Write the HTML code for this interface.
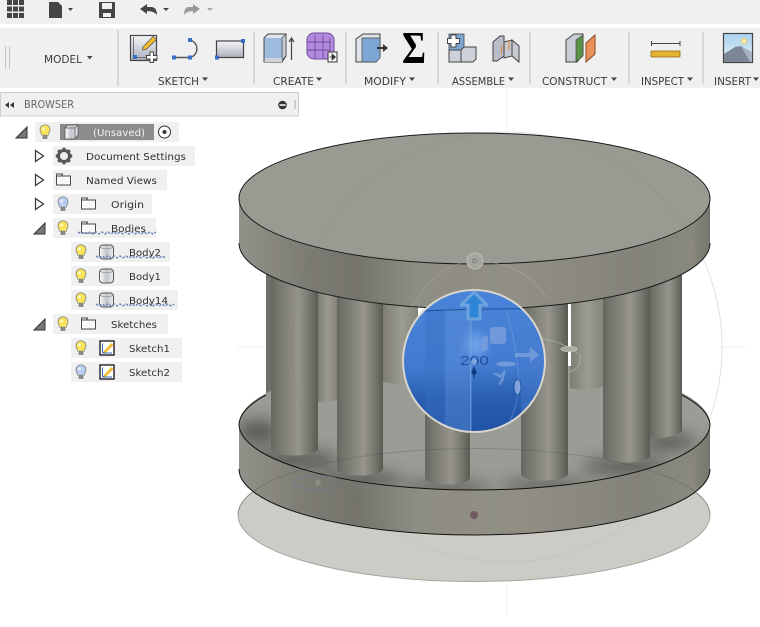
<!DOCTYPE html>
<html><head><meta charset="utf-8"><style>
html,body{margin:0;padding:0;background:#fff;width:760px;height:627px;overflow:hidden}
svg{display:block}
text{font-family:"DejaVu Sans","Liberation Sans",sans-serif}
.lb{font-size:10.5px;fill:#3a3a3a}
.tr{font-size:10px;fill:#303030}
</style></head><body>
<svg width="760" height="627" viewBox="0 0 760 627" xmlns="http://www.w3.org/2000/svg">
<defs>
<linearGradient id="side" x1="0" x2="1" y1="0" y2="0">
<stop offset="0" stop-color="#92918a"/><stop offset=".05" stop-color="#8b8a81"/><stop offset=".14" stop-color="#7d7c74"/><stop offset=".25" stop-color="#75746c"/><stop offset=".38" stop-color="#8f8e84"/><stop offset=".6" stop-color="#918f84"/><stop offset=".85" stop-color="#83827a"/><stop offset=".96" stop-color="#8a897f"/><stop offset="1" stop-color="#76756d"/>
</linearGradient>
<linearGradient id="col" x1="0" x2="1" y1="0" y2="0">
<stop offset="0" stop-color="#666660"/><stop offset=".12" stop-color="#72726a"/><stop offset=".35" stop-color="#84837b"/><stop offset=".58" stop-color="#96958d"/><stop offset=".8" stop-color="#7a7971"/><stop offset="1" stop-color="#5a5a53"/>
</linearGradient>
<linearGradient id="colb" x1="0" x2="1" y1="0" y2="0">
<stop offset="0" stop-color="#7d7c73"/><stop offset=".5" stop-color="#9c9b91"/><stop offset="1" stop-color="#85847a"/>
</linearGradient>
<linearGradient id="bl" x1="0" x2="0" y1="0" y2="1">
<stop offset="0" stop-color="#4a84d8"/><stop offset=".55" stop-color="#427acf"/><stop offset=".75" stop-color="#2a5fb2"/><stop offset="1" stop-color="#1f52a2"/>
</linearGradient>
<linearGradient id="ic" x1="0" x2="0" y1="0" y2="1"><stop offset="0" stop-color="#f4f5f8"/><stop offset="1" stop-color="#aab0bd"/></linearGradient>
<linearGradient id="cyl" x1="0" x2="1" y1="0" y2="0"><stop offset="0" stop-color="#fff"/><stop offset=".5" stop-color="#c0c4cc"/><stop offset="1" stop-color="#eee"/></linearGradient>
<linearGradient id="sky" x1="0" x2="0" y1="0" y2="1"><stop offset="0" stop-color="#a9d2ee"/><stop offset="1" stop-color="#e6f0f5"/></linearGradient>
<filter id="b6" x="-50%" y="-50%" width="200%" height="200%"><feGaussianBlur stdDeviation="6"/></filter>
<filter id="b9" x="-50%" y="-100%" width="200%" height="300%"><feGaussianBlur stdDeviation="8"/></filter>
<clipPath id="cc"><circle cx="474" cy="361" r="71"/></clipPath>
<clipPath id="disk"><ellipse cx="474.500" cy="424" rx="235.500" ry="66"/></clipPath>
<path id="bulb" d="M-3.300 4.200C-3.300 2.400-5 1.400-5-1.200A5 5 0 0 1 5-1.200C5 1.400 3.300 2.400 3.300 4.200Z" stroke="#777" stroke-width=".7"/>
<g id="by"><use href="#bulb" fill="#f7e45c"/><rect x="-2.500" y="4.500" width="5" height="3.500" rx="1" fill="#8a8a8a"/><circle cx="-1.500" cy="-2" r="1.500" fill="#fff8c0"/></g>
<g id="bb"><use href="#bulb" fill="#b9cdf0"/><rect x="-2.500" y="4.500" width="5" height="3.500" rx="1" fill="#8a8a8a"/><circle cx="-1.500" cy="-2" r="1.500" fill="#e8eefb"/></g>
<path id="folder" d="M.500 2.500H5.500L6.500 .500H.500ZM.500 2.500V11.500H14.500V2.500H5.500" fill="#f8f8f8" stroke="#4a4a4a" stroke-width="1"/>
<path id="tri" d="M11 0V11H0Z" fill="#777" stroke="#333" stroke-width="1"/>
<path id="tric" d="M.500 .500L8.500 6L.500 11.500Z" fill="#fff" stroke="#333" stroke-width="1.200"/>
<g id="cy"><rect x=".500" y="1" width="14" height="14" rx="3.500" fill="url(#cyl)" stroke="#555" stroke-width="1"/><path d="M1 3.500Q7.500 6 14 3.500" fill="none" stroke="#999" stroke-width=".7"/></g>
<g id="sk"><rect x=".500" y=".500" width="14" height="14" fill="#fff" stroke="#111" stroke-width="1.300"/><path d="M3 12L12 2.500L14 4.500L5 13.500Z" fill="#f2bc2e"/><path d="M3 3V12.500H12.500" fill="none" stroke="#3a6fc0" stroke-width="1"/></g>
<path id="wavy" d="M0 0l3 2 3-2 3 2 3-2 3 2 3-2 3 2 3-2 3 2 3-2 3 2 3-2 3 2 3-2 3 2 3-2 3 2 3-2 3 2 3-2 3 2 3-2 3 2 3-2 3 2 3-2" fill="none" stroke="#6e88b5" stroke-width="1.500" stroke-dasharray="2.500 1.500"/>
</defs>

<!-- top bar -->
<rect width="760" height="24" fill="#f0f0f0"/>
<rect y="28" width="760" height="60" fill="#f0f0f0"/>
<g fill="#454545">
<rect x="7" y="0" width="5" height="5"/><rect x="13" y="0" width="5" height="5"/><rect x="19" y="0" width="5" height="5"/>
<rect x="7" y="6.500" width="5" height="5"/><rect x="13" y="6.500" width="5" height="5"/><rect x="19" y="6.500" width="5" height="5"/>
<rect x="7" y="13" width="5" height="5"/><rect x="13" y="13" width="5" height="5"/><rect x="19" y="13" width="5" height="5"/>
<path d="M49 2H58L62 6V18H49Z"/><path d="M68 8H73L70.500 11Z"/>
<path d="M99 2H115V18H99Z"/>
<path d="M140 9L147 4V7H152Q157 8 157 15Q154 11 147 11V14Z"/><path d="M163 8H169L166 11Z"/>
</g>
<rect x="102" y="3" width="10" height="6" fill="#f0f0f0"/><rect x="103" y="13" width="8" height="4" fill="#f0f0f0"/>
<path d="M200 9L193 4V7H188Q184 8 184 15Q187 11 193 11V14Z" fill="#9a9a9a"/><path d="M207 8H213L210 11Z" fill="#aaa"/>

<!-- toolbar dividers -->
<g fill="#d8d8d8"><rect x="117" y="30" width="2" height="56"/><rect x="253" y="32" width="2" height="52"/><rect x="345" y="32" width="2" height="52"/><rect x="437" y="32" width="2" height="52"/><rect x="529" y="32" width="2" height="52"/><rect x="628" y="32" width="2" height="52"/><rect x="702" y="32" width="2" height="52"/></g>
<path d="M5.500 46V69M9.500 46V69" stroke="#c4c4c4" stroke-width="1"/>

<!-- toolbar labels -->
<text class="lb" x="44" y="63" textLength="38" lengthAdjust="spacingAndGlyphs">MODEL</text><path d="M87 56H92.500L89.700 59.500Z" fill="#444"/>
<text class="lb" x="158" y="85" textLength="41" lengthAdjust="spacingAndGlyphs">SKETCH</text><path d="M202 77.500H208L205 81Z" fill="#444"/>
<text class="lb" x="273" y="85" textLength="41" lengthAdjust="spacingAndGlyphs">CREATE</text><path d="M316 77.500H322L319 81Z" fill="#444"/>
<text class="lb" x="364" y="85" textLength="42" lengthAdjust="spacingAndGlyphs">MODIFY</text><path d="M409 77.500H415L412 81Z" fill="#444"/>
<text class="lb" x="452" y="85" textLength="53" lengthAdjust="spacingAndGlyphs">ASSEMBLE</text><path d="M508 77.500H514L511 81Z" fill="#444"/>
<text class="lb" x="542" y="85" textLength="65" lengthAdjust="spacingAndGlyphs">CONSTRUCT</text><path d="M611 77.500H617L614 81Z" fill="#444"/>
<text class="lb" x="641" y="85" textLength="43" lengthAdjust="spacingAndGlyphs">INSPECT</text><path d="M687 77.500H693L690 81Z" fill="#444"/>
<text class="lb" x="714" y="85" textLength="37" lengthAdjust="spacingAndGlyphs">INSERT</text><path d="M753 77.500H759L756 81Z" fill="#444"/>

<!-- sketch icon -->
<rect x="130.500" y="35.500" width="26" height="25" fill="url(#ic)" stroke="#444" stroke-width="1.200"/>
<path d="M133.500 37V57.500H153" fill="none" stroke="#555" stroke-width=".8"/>
<path d="M143 47L153 36.500L156.500 39.500L146 49.500L142.500 50Z" fill="#f2bc2e" stroke="#555" stroke-width=".8"/>
<rect x="133" y="55" width="4" height="4" fill="#3a6fc8"/>
<path d="M150 52h3.500v3.500h3.500v3.500h-3.500v3.500h-3.500v-3.500h-3.500v-3.500h3.500z" fill="#fff" stroke="#444" stroke-width="1"/>
<!-- line icon -->
<path d="M174 57.500H190A9 9 0 0 0 190 40" fill="none" stroke="#555" stroke-width="1.400"/>
<rect x="172" y="55.500" width="4" height="4" fill="#3a6fc8"/><rect x="188" y="55.500" width="4" height="4" fill="#3a6fc8"/><rect x="188" y="38" width="4" height="4" fill="#3a6fc8"/>
<!-- rect icon -->
<rect x="216.500" y="41" width="27" height="16.500" fill="url(#ic)" stroke="#444" stroke-width="1.200"/>
<rect x="241" y="39" width="4" height="4" fill="#3a6fc8"/><rect x="215" y="55.500" width="4" height="4" fill="#3a6fc8"/>
<!-- box extrude -->
<path d="M264 38L268 34H286V56L282 62H264Z" fill="#dfe3ea" stroke="#444" stroke-width="1"/>
<path d="M264.500 38H282V58H264.500Z" fill="#9dbbdc"/><path d="M282 38L286 34V56L282 60Z" fill="#c4c9d2" stroke="#444" stroke-width=".7"/>
<path d="M264.500 58H282V62H264.500Z" fill="#cfd2d8"/>
<path d="M291.500 60V39M289 42L291.500 38L294 42" fill="none" stroke="#444" stroke-width="1.200"/>
<!-- mesh -->
<rect x="307" y="33" width="27" height="26" rx="7" fill="#b48ae0" stroke="#6a4a9a" stroke-width="1"/>
<path d="M307 42H330M307 50H330M315 35V59M323 35V59M330 38V56" stroke="#6a4a9a" stroke-width=".9"/>
<rect x="328" y="52" width="9" height="10" fill="#f4f4f4" stroke="#333" stroke-width="1"/><path d="M329.500 57H333M332 54L335.500 57L332 60Z" fill="#333" stroke="#333" stroke-width=".7"/>
<!-- modify press pull -->
<path d="M356 39L363 34H380V56L376 62H356Z" fill="#dfe3ea" stroke="#444" stroke-width="1"/>
<path d="M362 38H380V58L376 62H362Z" fill="#7ea6d4" stroke="#444" stroke-width=".7"/>
<path d="M377 47H383V44L388 48L383 52V49H377Z" fill="#333"/>
<!-- sigma -->
<text x="402" y="63" font-size="45" font-weight="bold" textLength="24" lengthAdjust="spacingAndGlyphs" style="font-family:'Liberation Serif',serif" fill="#000">Σ</text>
<!-- assemble -->
<path d="M449 34H464V50H449Z" fill="#7ea6d4" stroke="#444" stroke-width=".8"/><path d="M449 50H461V62H449Z" fill="#cdd1d9" stroke="#444" stroke-width="1"/><path d="M461 50L464 47H476V59L473 62H461Z" fill="#cdd1d9" stroke="#444" stroke-width="1"/>
<path d="M451 35h5v3.500h3.500v5h-3.500v3.500h-5v-3.500h-3.500v-5h3.500z" fill="#fff" stroke="#444" stroke-width="1"/>
<!-- joint -->
<path d="M493 42L500 36H504V56L497 61H493Z" fill="#b8bdc8" stroke="#444" stroke-width="1"/><path d="M512 40L519 46V62L512 56ZM504 42L512 40V56L504 58Z" fill="#c6cad2" stroke="#444" stroke-width="1"/>
<path d="M501.500 46V54M509 40V50" stroke="#e08030" stroke-width="1"/>
<!-- construct -->
<path d="M566 40L574 34H583V54L577 62H566Z" fill="#c8ccd4" stroke="#444" stroke-width="1"/><path d="M576 40L583 35V56L576 62Z" fill="#5a9148" stroke="#444" stroke-width=".7"/>
<path d="M586 43L595 35V54L586 62Z" fill="#e8925a" stroke="#8a4a20" stroke-width="1"/>
<!-- inspect -->
<path d="M651.500 41V46M680 41V46M651.500 43.500H680" stroke="#444" stroke-width="1" fill="none"/>
<rect x="651" y="51" width="29" height="6" rx=".5" fill="#e6b32e" stroke="#8a6a14" stroke-width=".8"/>
<!-- insert -->
<rect x="723.500" y="33.500" width="29" height="29" fill="url(#sky)" stroke="#444" stroke-width="1.200"/>
<path d="M724 62V54L735 47L741 46L752 60V62Z" fill="#7d8694"/><path d="M741 46L752 52V62H750Z" fill="#a8b3bf"/>
<circle cx="744" cy="41" r="2.500" fill="#f9f3c0" stroke="#f2c84a"/>

<!-- browser header -->
<rect x=".500" y="92.500" width="298" height="23.500" fill="#f0f0f0" stroke="#cfcfcf"/>
<path d="M9 102V108L5 105ZM14 102V108L10 105Z" fill="#333"/>
<text x="24" y="108" font-size="10.500" fill="#666" textLength="50" lengthAdjust="spacingAndGlyphs">BROWSER</text>
<circle cx="282.500" cy="105" r="4.300" fill="#333"/><rect x="279.500" y="104.300" width="6" height="1.500" fill="#fff"/>
<path d="M295 100V109" stroke="#aaa" stroke-width="1"/>

<!-- faint gizmo guides behind -->
<path d="M507 88V132M507 562V615M237 347H292M722 347H745" stroke="#efefef" stroke-width="1" fill="none"/>
<circle cx="507" cy="347" r="215" fill="none" stroke="#ebebeb" stroke-width="1"/>

<!-- ground plane -->
<ellipse cx="474" cy="515" rx="236" ry="66.500" fill="#cdcbc6" stroke="#a6a5a0" stroke-width="1"/>

<!-- back columns -->
<rect x="266" y="260" width="7" height="160" fill="#6f6f67"/>

<!-- bottom disc -->
<path d="M239 424V469A235.500 66 0 0 0 710 469V424Z" fill="url(#side)"/>
<g clip-path="url(#disk)">
<rect x="239" y="355" width="471" height="140" fill="#9a9c95"/>
<g fill="#3a3a34" filter="url(#b9)" opacity=".7">
<ellipse cx="295" cy="460" rx="45" ry="9"/><ellipse cx="360" cy="480" rx="45" ry="8"/><ellipse cx="447" cy="488" rx="45" ry="6"/><ellipse cx="545" cy="486" rx="45" ry="6"/><ellipse cx="626" cy="467" rx="45" ry="8"/><ellipse cx="668" cy="442" rx="30" ry="8"/><ellipse cx="258" cy="432" rx="22" ry="12"/>
</g>
</g>
<path d="M239 469A235.500 66 0 0 0 710 469" fill="none" stroke="#111" stroke-width="1"/>
<path d="M239 424A235.500 66 0 0 0 710 424" fill="none" stroke="#111" stroke-width="1"/>
<path d="M239 424A235.500 66 0 0 1 266 395M682 395A235.500 66 0 0 1 710 424" fill="none" stroke="#111" stroke-width="1"/>

<!-- far columns -->
<path d="M318 270H337V400Q327 403 318 402Z" fill="url(#colb)"/>
<path d="M383 270H420V380Q404 386 383 382Z" fill="url(#colb)"/>
<path d="M570 270H604V386Q587 393 570 388Z" fill="url(#colb)"/>
<!-- white slit -->
<rect x="568" y="300" width="3" height="66" fill="#fff"/>
<rect x="418" y="300" width="8" height="20" fill="#fff"/>
<!-- far column right -->
<path d="M650 270H682V432Q666 440 650 437Z" fill="url(#col)"/>
<!-- near columns -->
<path d="M271 270H318V449A23.500 6.500 0 0 1 271 449Z" fill="url(#col)"/>
<path d="M337 270H383V469A23 6.500 0 0 1 337 469Z" fill="url(#col)"/>
<path d="M425 270H470V478A22.500 6.500 0 0 1 425 478Z" fill="url(#col)"/>
<path d="M521 270H568V474A23.500 6.500 0 0 1 521 474Z" fill="url(#col)"/>
<path d="M603 270H650V456A23.500 6.500 0 0 1 603 456Z" fill="url(#col)"/>

<!-- top disc -->
<path d="M239 198V243A235.500 66 0 0 0 710 243V198Z" fill="url(#side)"/>
<path d="M239 243A235.500 66 0 0 0 710 243" fill="none" stroke="#1a1a1a" stroke-width="1"/>
<ellipse cx="474.500" cy="198.500" rx="235.500" ry="65.500" fill="#999b93" stroke="#1a1a1a" stroke-width="1"/>
<circle cx="507" cy="347" r="215" fill="none" stroke="#000" stroke-opacity=".04" stroke-width="1"/>

<!-- overlay ground outline -->
<path d="M238 515A236 66.500 0 0 1 710 515" fill="none" stroke="#444" stroke-opacity=".25" stroke-width="1"/>
<ellipse cx="318" cy="482.500" rx="24" ry="7" fill="none" stroke="#6a7a95" stroke-opacity=".6" stroke-width="1"/>
<circle cx="318" cy="482.500" r="3" fill="#8d8d85"/>
<circle cx="474" cy="515" r="4" fill="#6f5a62"/>

<!-- gizmo handles -->
<circle cx="475" cy="261" r="8" fill="#a5a69f" stroke="#b6b6ae" stroke-width="1.500"/><circle cx="474.500" cy="261" r="2" fill="none" stroke="#777"/>
<path d="M400 330Q430 262 475 261Q525 262 548 300" fill="none" stroke="#a8a89f" stroke-opacity=".6" stroke-width=".8"/>
<ellipse cx="569" cy="349" rx="8" ry="2.500" fill="#a8a8a0" stroke="#c0c0b8"/>
<path d="M518 335Q560 338 580 355Q582 368 570 372" fill="none" stroke="#bcbcb4" stroke-opacity=".7" stroke-width=".8"/>

<!-- blue circle -->
<g clip-path="url(#cc)">
<rect x="403" y="290" width="142" height="142" fill="url(#bl)"/>
<rect x="425" y="309" width="20" height="123" fill="#3a70c4" opacity=".4"/>
<rect x="445" y="309" width="25" height="123" fill="#5a8dd8" opacity=".45"/>
<rect x="470" y="309" width="1.500" height="123" fill="#7ba4e4" opacity=".7"/>
<rect x="521" y="309" width="25" height="123" fill="#4a80d2" opacity=".4"/>
<ellipse cx="476" cy="345" rx="8" ry="12" fill="#7eaef0" filter="url(#b6)"/>
<path d="M403 312Q474 308 545 309" stroke="#1d4f9c" stroke-width="1" fill="none"/>
</g>
<circle cx="474" cy="361" r="71" fill="none" stroke="#d9d7cd" stroke-width="2"/>

<!-- gizmo on blue -->
<path d="M474 292L487 305H480V319H468V305H461Z" fill="#2f86d8" stroke="#6da4e0" stroke-width="3" stroke-linejoin="round"/>
<rect x="490" y="327" width="16" height="17" rx="3" fill="#7fa3dc" opacity=".75"/>
<path d="M482 338L488 335V349L482 352Z" fill="#7fa3dc" opacity=".65"/>
<path d="M515 353H530V347L539 355L530 362V357H515Z" fill="#7fa3dc" opacity=".75"/>
<ellipse cx="506" cy="364" rx="10" ry="2.500" fill="#7fa3dc" opacity=".8"/>
<path d="M493 373L500 377L505 370L503 380L499 385L503 376Z" fill="#7fa3dc" opacity=".7" stroke="#7fa3dc" stroke-width="1.500"/>
<ellipse cx="517.500" cy="387" rx="3.500" ry="7.500" fill="#7fa3dc" stroke="#1d4f9c" stroke-width=".8"/>
<path d="M506 310Q517 345 519 380Q518 410 505 430" fill="none" stroke="#9ab9e8" stroke-opacity=".4" stroke-width=".8"/>
<text x="460" y="365" font-size="12.500" fill="#1f4f9c" textLength="29" lengthAdjust="spacingAndGlyphs" style="font-family:'Liberation Sans',sans-serif">200</text>
<circle cx="474" cy="362" r="3" fill="#8eb0e6" opacity=".8"/>
<path d="M474 366L476.500 372V374H475L474 380L473 374H471.500V372Z" fill="#0f3a80"/>

<!-- browser rows -->
<g fill="#f0f0f0">
<rect x="35" y="122" width="144" height="20"/><rect x="53" y="146" width="142" height="20"/><rect x="53" y="170" width="114" height="20"/><rect x="53" y="194" width="99" height="20"/><rect x="53" y="218" width="103" height="20"/><rect x="71" y="242" width="99" height="20"/><rect x="71" y="266" width="99" height="20"/><rect x="71" y="290" width="107" height="20"/><rect x="53" y="314" width="115" height="20"/><rect x="71" y="338" width="111" height="20"/><rect x="71" y="362" width="111" height="20"/>
</g>
<rect x="60" y="124" width="94" height="16" fill="#8c8c8c"/>
<path d="M65 128L68 125H78V135L75 139H65Z" fill="url(#cyl)" stroke="#555" stroke-width=".8"/><path d="M65 128H75V139M75 128L78 125" fill="none" stroke="#555" stroke-width=".8"/>
<text x="93" y="136" font-size="10" fill="#f2f2f2" textLength="52" lengthAdjust="spacingAndGlyphs">(Unsaved)</text>
<circle cx="164.500" cy="132" r="6" fill="#fff" stroke="#333" stroke-width="1"/><circle cx="164.500" cy="132" r="2" fill="#333"/>
<use href="#tri" x="16" y="127"/><use href="#by" x="45" y="131"/>

<use href="#tric" x="35" y="150"/><use href="#tric" x="35" y="174"/><use href="#tric" x="35" y="198"/>
<use href="#tri" x="34" y="223"/><use href="#tri" x="34" y="319"/>

<g transform="translate(64 156)" fill="#555"><circle r="5.500" fill="none" stroke="#555" stroke-width="3"/><path d="M-1.500-8.200H1.500V-5.500H-1.500ZM-1.500 8.200H1.500V5.500H-1.500ZM-8.200-1.500V1.500H-5.500V-1.500ZM8.200-1.500V1.500H5.500V-1.500Z"/><path d="M-1.500-8.200H1.500V-5.500H-1.500ZM-1.500 8.200H1.500V5.500H-1.500ZM-8.200-1.500V1.500H-5.500V-1.500ZM8.200-1.500V1.500H5.500V-1.500Z" transform="rotate(45)"/></g>
<text class="tr" x="86" y="160" textLength="100" lengthAdjust="spacingAndGlyphs">Document Settings</text>
<use href="#folder" x="56" y="173.500"/>
<text class="tr" x="86" y="184" textLength="71" lengthAdjust="spacingAndGlyphs">Named Views</text>
<use href="#bb" x="63" y="203"/><use href="#folder" x="81" y="197.500"/>
<text class="tr" x="111" y="208" textLength="33" lengthAdjust="spacingAndGlyphs">Origin</text>
<use href="#by" x="63" y="227"/><use href="#folder" x="81" y="221.500"/>
<text class="tr" x="111" y="232" textLength="35" lengthAdjust="spacingAndGlyphs">Bodies</text>
<use href="#wavy" x="78" y="232"/>
<use href="#by" x="81" y="251"/><use href="#cy" x="99" y="244"/>
<text class="tr" x="129" y="256" textLength="32" lengthAdjust="spacingAndGlyphs">Body2</text>
<svg x="96" y="255" width="70" height="6"><use href="#wavy" x="0" y="1"/></svg>
<use href="#by" x="81" y="275"/><use href="#cy" x="99" y="268"/>
<text class="tr" x="129" y="280" textLength="32" lengthAdjust="spacingAndGlyphs">Body1</text>
<use href="#by" x="81" y="299"/><use href="#cy" x="99" y="292"/>
<text class="tr" x="129" y="304" textLength="39" lengthAdjust="spacingAndGlyphs">Body14</text>
<use href="#wavy" x="96" y="304"/>
<use href="#by" x="63" y="323"/><use href="#folder" x="81" y="317.500"/>
<text class="tr" x="111" y="328" textLength="46" lengthAdjust="spacingAndGlyphs">Sketches</text>
<use href="#by" x="81" y="347"/><use href="#sk" x="99.500" y="340.500"/>
<text class="tr" x="129" y="352" textLength="41" lengthAdjust="spacingAndGlyphs">Sketch1</text>
<use href="#bb" x="81" y="371"/><use href="#sk" x="99.500" y="364.500"/>
<text class="tr" x="129" y="376" textLength="41" lengthAdjust="spacingAndGlyphs">Sketch2</text>
</svg>
</body></html>
